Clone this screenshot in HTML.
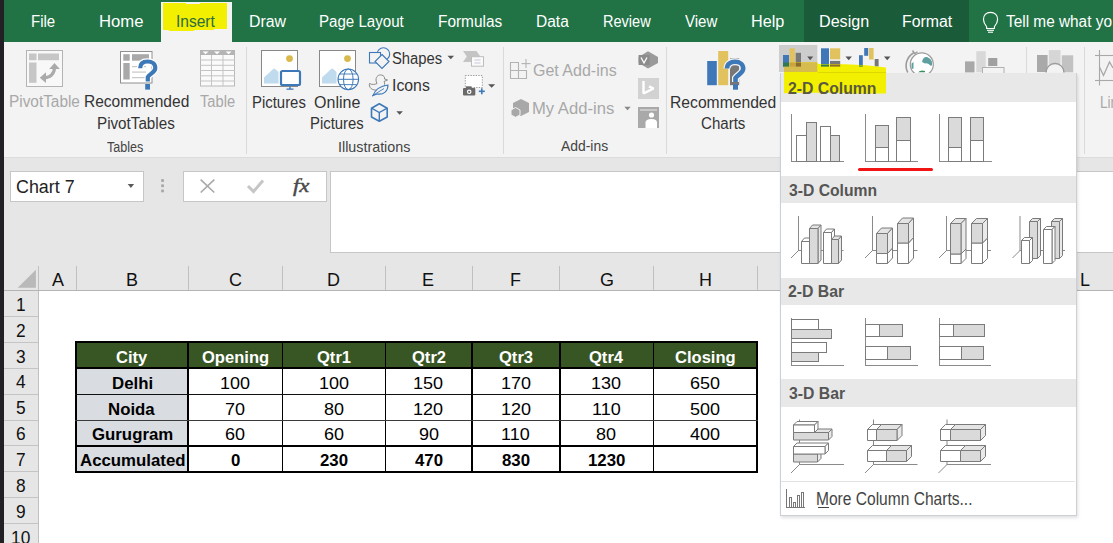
<!DOCTYPE html><html><head><meta charset="utf-8"><style>
html,body{margin:0;padding:0}
body{width:1113px;height:543px;overflow:hidden;position:relative;font-family:"Liberation Sans",sans-serif}
.r{position:absolute}
.t{position:absolute;white-space:nowrap;transform-origin:0 0}
</style></head><body>
<div class="r" style="left:0px;top:0px;width:1113px;height:543px;background:#fff;"></div>
<div class="r" style="left:4px;top:0px;width:1109px;height:42px;background:#217346;"></div>
<div class="r" style="left:804px;top:0px;width:165px;height:42px;background:#1a5b39;"></div>
<div class="r" style="left:4px;top:42px;width:1109px;height:115px;background:#f3f3f3;"></div>
<div class="r" style="left:161px;top:2px;width:71px;height:40px;background:#f3f3f3;"></div>
<div class="r" style="left:4px;top:157px;width:1109px;height:1px;background:#dcdcdc;"></div>
<div class="r" style="left:4px;top:158px;width:1109px;height:133px;background:#e6e6e6;"></div>
<div class="r" style="left:0px;top:0px;width:4px;height:543px;background:#222024;"></div>
<div class="t" style="left:30.50px;top:14.00px;font-size:16.00px;line-height:16.00px;font-weight:400;color:#fff;font-family:'Liberation Sans', sans-serif;transform:scaleX(0.9386);">File</div>
<div class="t" style="left:99.16px;top:14.00px;font-size:16.00px;line-height:16.00px;font-weight:400;color:#fff;font-family:'Liberation Sans', sans-serif;transform:scaleX(1.0433);">Home</div>
<div class="t" style="left:248.73px;top:14.00px;font-size:16.00px;line-height:16.00px;font-weight:400;color:#fff;font-family:'Liberation Sans', sans-serif;transform:scaleX(0.9922);">Draw</div>
<div class="t" style="left:319.29px;top:14.00px;font-size:16.00px;line-height:16.00px;font-weight:400;color:#fff;font-family:'Liberation Sans', sans-serif;transform:scaleX(0.9437);">Page Layout</div>
<div class="t" style="left:437.97px;top:14.00px;font-size:16.00px;line-height:16.00px;font-weight:400;color:#fff;font-family:'Liberation Sans', sans-serif;transform:scaleX(0.9618);">Formulas</div>
<div class="t" style="left:535.86px;top:14.00px;font-size:16.00px;line-height:16.00px;font-weight:400;color:#fff;font-family:'Liberation Sans', sans-serif;transform:scaleX(0.9698);">Data</div>
<div class="t" style="left:603.14px;top:14.00px;font-size:16.00px;line-height:16.00px;font-weight:400;color:#fff;font-family:'Liberation Sans', sans-serif;transform:scaleX(0.9082);">Review</div>
<div class="t" style="left:684.72px;top:14.00px;font-size:16.00px;line-height:16.00px;font-weight:400;color:#fff;font-family:'Liberation Sans', sans-serif;transform:scaleX(0.9382);">View</div>
<div class="t" style="left:750.70px;top:14.00px;font-size:16.00px;line-height:16.00px;font-weight:400;color:#fff;font-family:'Liberation Sans', sans-serif;transform:scaleX(1.0142);">Help</div>
<div class="t" style="left:818.91px;top:14.00px;font-size:16.00px;line-height:16.00px;font-weight:400;color:#fff;font-family:'Liberation Sans', sans-serif;transform:scaleX(1.0076);">Design</div>
<div class="t" style="left:902.23px;top:14.00px;font-size:16.00px;line-height:16.00px;font-weight:400;color:#fff;font-family:'Liberation Sans', sans-serif;transform:scaleX(0.9923);">Format</div>
<svg class="r" style="left:0;top:0" width="1113" height="60"><path d="M163 3 L186 3 L186 4 L200 4 L200 3 L227 3 L227 29 L215 29 L213 30 L195 30 L193 31 L170 31 L168 30 L163 30 Z" fill="#f2f000"/></svg>
<div class="t" style="left:176.30px;top:14.00px;font-size:16.00px;line-height:16.00px;font-weight:400;color:#2a6b3f;font-family:'Liberation Sans', sans-serif;transform:scaleX(0.9693);">Insert</div>
<div class="t" style="left:1005.69px;top:14.00px;font-size:16.00px;line-height:16.00px;font-weight:400;color:#fff;font-family:'Liberation Sans', sans-serif;transform:scaleX(0.9608);">Tell me what yo</div>
<div class="t" style="left:8.77px;top:94.00px;font-size:16.00px;line-height:16.00px;font-weight:400;color:#a8a8a8;font-family:'Liberation Sans', sans-serif;transform:scaleX(0.9605);">PivotTable</div>
<div class="t" style="left:83.76px;top:94.00px;font-size:16.00px;line-height:16.00px;font-weight:400;color:#333333;font-family:'Liberation Sans', sans-serif;transform:scaleX(0.9702);">Recommended</div>
<div class="t" style="left:96.78px;top:116.00px;font-size:16.00px;line-height:16.00px;font-weight:400;color:#333333;font-family:'Liberation Sans', sans-serif;transform:scaleX(0.9500);">PivotTables</div>
<div class="t" style="left:200.31px;top:94.00px;font-size:16.00px;line-height:16.00px;font-weight:400;color:#a8a8a8;font-family:'Liberation Sans', sans-serif;transform:scaleX(0.9167);">Table</div>
<div class="t" style="left:106.75px;top:140.00px;font-size:14.55px;line-height:14.55px;font-weight:400;color:#444;font-family:'Liberation Sans', sans-serif;transform:scaleX(0.8630);">Tables</div>
<div class="t" style="left:251.71px;top:95.00px;font-size:16.00px;line-height:16.00px;font-weight:400;color:#333333;font-family:'Liberation Sans', sans-serif;transform:scaleX(0.9317);">Pictures</div>
<div class="t" style="left:314.08px;top:95.00px;font-size:16.00px;line-height:16.00px;font-weight:400;color:#333333;font-family:'Liberation Sans', sans-serif;transform:scaleX(1.0000);">Online</div>
<div class="t" style="left:309.81px;top:116.00px;font-size:16.00px;line-height:16.00px;font-weight:400;color:#333333;font-family:'Liberation Sans', sans-serif;transform:scaleX(0.9299);">Pictures</div>
<div class="t" style="left:392.33px;top:51.00px;font-size:16.00px;line-height:16.00px;font-weight:400;color:#333333;font-family:'Liberation Sans', sans-serif;transform:scaleX(0.9252);">Shapes</div>
<div class="t" style="left:391.58px;top:78.00px;font-size:16.00px;line-height:16.00px;font-weight:400;color:#333333;font-family:'Liberation Sans', sans-serif;transform:scaleX(0.9879);">Icons</div>
<div class="t" style="left:338.01px;top:140.00px;font-size:14.55px;line-height:14.55px;font-weight:400;color:#444;font-family:'Liberation Sans', sans-serif;transform:scaleX(0.9832);">Illustrations</div>
<div class="t" style="left:532.90px;top:63.00px;font-size:16.00px;line-height:16.00px;font-weight:400;color:#a8a8a8;font-family:'Liberation Sans', sans-serif;transform:scaleX(1.0007);">Get Add-ins</div>
<div class="t" style="left:532.37px;top:101.00px;font-size:16.00px;line-height:16.00px;font-weight:400;color:#a8a8a8;font-family:'Liberation Sans', sans-serif;transform:scaleX(1.0391);">My Add-ins</div>
<div class="t" style="left:560.60px;top:139.00px;font-size:14.55px;line-height:14.55px;font-weight:400;color:#444;font-family:'Liberation Sans', sans-serif;transform:scaleX(0.9546);">Add-ins</div>
<div class="t" style="left:669.75px;top:95.00px;font-size:16.00px;line-height:16.00px;font-weight:400;color:#333333;font-family:'Liberation Sans', sans-serif;transform:scaleX(0.9797);">Recommended</div>
<div class="t" style="left:700.85px;top:116.00px;font-size:16.00px;line-height:16.00px;font-weight:400;color:#333333;font-family:'Liberation Sans', sans-serif;transform:scaleX(0.9419);">Charts</div>
<div class="t" style="left:1099.91px;top:95.00px;font-size:16.00px;line-height:16.00px;font-weight:400;color:#a8a8a8;font-family:'Liberation Sans', sans-serif;transform:scaleX(0.8499);">Line</div>
<svg class="r" style="left:0;top:0" width="1113" height="543"><rect x="26.5" y="50.5" width="36" height="36" fill="#f8f8f8" stroke="#b4b4b4"/><rect x="29" y="53.5" width="7.5" height="6.7" fill="#c6c6c6"/><rect x="38" y="53.5" width="21" height="6.7" fill="#c6c6c6"/><rect x="29" y="62.5" width="7.5" height="20.3" fill="#c6c6c6"/><path d="M45 77.6 A9.3 9.3 0 0 0 54.4 68.3" fill="none" stroke="#ababab" stroke-width="3.2"/><polygon points="39.8,77.7 46,72.3 46,83.1" fill="#ababab"/><polygon points="54.5,63 49.2,69 59.8,69" fill="#ababab"/><rect x="120.5" y="51.5" width="31.5" height="31.5" fill="#fff" stroke="#909090"/><rect x="123.3" y="54.2" width="6.4" height="6.5" fill="#a9a9a9"/><rect x="132" y="54.2" width="17" height="6.5" fill="#a9a9a9"/><rect x="123.3" y="63" width="6.4" height="16.5" fill="#a9a9a9"/><rect x="132" y="66" width="14" height="1.2" fill="#c8c8c8"/><rect x="132" y="71.5" width="14" height="1.2" fill="#c8c8c8"/><rect x="132" y="77" width="14" height="1.2" fill="#c8c8c8"/><path d="M140.2 68.2 C140.2 62.5 144 61.5 147.5 61.5 C152 61.5 155.3 64 155.3 68 C155.3 72.5 150 73.5 147.8 77 L147.8 81.5" fill="none" stroke="#fff" stroke-width="6.5"/><path d="M140.2 68.2 C140.2 62.5 144 61.5 147.5 61.5 C152 61.5 155.3 64 155.3 68 C155.3 72.5 150 73.5 147.8 77 L147.8 81.5" fill="none" stroke="#3d78b8" stroke-width="4.2"/><rect x="145.2" y="84" width="4.8" height="5.6" fill="#3d78b8"/><rect x="200.5" y="50.5" width="34" height="35.5" fill="#fafafa" stroke="#b9b9b9"/><rect x="200" y="50" width="35" height="5" fill="#b4b4b4"/><polygon points="202.6,51.5 208.6,51.5 205.6,54.3" fill="#fff"/><polygon points="214,51.5 220,51.5 217,54.3" fill="#fff"/><polygon points="225.6,51.5 231.6,51.5 228.6,54.3" fill="#fff"/><rect x="211.0" y="55" width="1" height="31" fill="#c4c4c4"/><rect x="222.5" y="55" width="1" height="31" fill="#c4c4c4"/><rect x="200" y="59.5" width="35" height="1" fill="#c4c4c4"/><rect x="200" y="64.8" width="35" height="1" fill="#c4c4c4"/><rect x="200" y="70.0" width="35" height="1" fill="#c4c4c4"/><rect x="200" y="75.3" width="35" height="1" fill="#c4c4c4"/><rect x="200" y="80.5" width="35" height="1" fill="#c4c4c4"/><rect x="261.5" y="50.5" width="36" height="36" fill="#fff" stroke="#888"/><circle cx="289.5" cy="58.6" r="3.4" fill="#d9b84c"/><polygon points="264,83.5 264,77.5 273.5,68.8 275,68.8 278.5,72 278.5,83.5" fill="#c0daee"/><rect x="281" y="71" width="19" height="14" rx="1.5" fill="#fff" stroke="#3d78b8" stroke-width="2.2"/><rect x="289.3" y="86.5" width="1.4" height="2.5" fill="#3d78b8"/><rect x="286.5" y="88.5" width="7" height="1.3" fill="#3d78b8"/><rect x="319.5" y="50.5" width="36" height="36" fill="#fff" stroke="#888"/><circle cx="347.5" cy="58.6" r="3.4" fill="#d9b84c"/><polygon points="322,83.5 322,77.5 331.5,68.8 333,68.8 336.5,72 336.5,83.5" fill="#c0daee"/><circle cx="348.3" cy="79.3" r="10.3" fill="#fff" stroke="#3d78b8" stroke-width="1.1"/><ellipse cx="348.3" cy="79.3" rx="4.8" ry="10.3" fill="none" stroke="#3d78b8" stroke-width="1"/><line x1="338" y1="79.3" x2="358.6" y2="79.3" stroke="#3d78b8" stroke-width="1"/><line x1="340" y1="74" x2="356.6" y2="74" stroke="#3d78b8" stroke-width="0.9"/><line x1="340" y1="84.6" x2="356.6" y2="84.6" stroke="#3d78b8" stroke-width="0.9"/><circle cx="383.4" cy="54" r="6.3" fill="none" stroke="#3d78b8" stroke-width="1.1"/><rect x="369.5" y="52.5" width="11" height="10.5" fill="#f3f3f3" stroke="#3d78b8" stroke-width="1.1"/><polygon points="382,54.5 389,61.5 382,68.5 375,61.5" fill="#f3f3f3" stroke="#3d78b8" stroke-width="1.1"/><path d="M376 80 C376 76 379 74.5 381.5 75 C384 75.5 385 77.5 384.5 79 L387.5 80 L384 81.5 C385 83 385 86 383 88 C381 90.5 374 91 371 88.5 C369.5 87 369 85 369.5 83.5 C372 85 375 84.5 377 83.5 C376.5 82.5 376 81.5 376 80 Z" fill="none" stroke="#8a8a8a" stroke-width="1"/><path d="M373 95.5 C375 90 380 86 388 85 C388 91 384 95 377 94 Z" fill="#f3f3f3" stroke="#3d78b8" stroke-width="1.1"/><line x1="372" y1="96" x2="384" y2="88.5" stroke="#3d78b8" stroke-width="0.9"/><polygon points="379.3,103.8 387.2,108.2 387.2,117 379.3,121.2 371.5,117 371.5,108.2" fill="none" stroke="#3d78b8" stroke-width="1.6" stroke-linejoin="round"/><polyline points="371.5,108.2 379.3,112.5 387.2,108.2" fill="none" stroke="#3d78b8" stroke-width="1.4"/><line x1="379.3" y1="112.5" x2="379.3" y2="121" stroke="#3d78b8" stroke-width="1.4"/><polygon points="447.55,55.7 454.05,55.7 450.8,59.3" fill="#555"/><polygon points="396.35,111.2 402.85,111.2 399.6,114.8" fill="#555"/><polygon points="488.1,84.2 495.1,84.2 491.6,87.8" fill="#555"/><polygon points="624.25,106.7 630.75,106.7 627.5,110.3" fill="#888"/><polygon points="463,51 476.5,51 480.3,56.5 476.5,62 463,62 466.8,56.5" fill="#c4c4c4"/><rect x="471.5" y="56.7" width="12" height="9.5" fill="#fafafa" stroke="#bdbdbd"/><rect x="474.5" y="59.5" width="6" height="1" fill="#c8c8d8"/><rect x="474.5" y="62.5" width="6" height="1" fill="#c8c8d8"/><rect x="465.3" y="75.5" width="17" height="12" fill="#fff" stroke="#9a9a9a" stroke-width="1" stroke-dasharray="1.3 1.3"/><rect x="463" y="88" width="12.3" height="7.6" rx="1" fill="#6a6a6a"/><rect x="466" y="86.3" width="5.5" height="2.5" fill="#6a6a6a"/><circle cx="469.2" cy="91.8" r="2.3" fill="#fff"/><circle cx="469.2" cy="91.8" r="1.1" fill="#6a6a6a"/><rect x="478.8" y="90.5" width="6" height="1.6" fill="#3d78b8"/><rect x="481" y="88.3" width="1.6" height="6" fill="#3d78b8"/><path d="M510.5 78.5 V62.5 H518.5 V78.5 Z M510.5 70.5 H526.5 V78.5 H518.5" fill="none" stroke="#b3b3b3" stroke-width="1.1"/><line x1="521.5" y1="63.6" x2="530.5" y2="63.6" stroke="#b3b3b3" stroke-width="1.1"/><line x1="526" y1="59" x2="526" y2="68" stroke="#b3b3b3" stroke-width="1.1"/><polygon points="521,99 529,103 529,112 521,116 513,112 513,103" fill="#a8a8a8"/><polygon points="515.5,107.5 520,110 520,115 515.5,117.3 511,115 511,110" fill="#a8a8a8" stroke="#f3f3f3" stroke-width="1"/><polygon points="648,51.3 658,57 658,63 648,68.5 638.6,63 638.6,57" fill="#9a9a9a"/><rect x="638.6" y="55" width="11" height="10" fill="#8c8c8c"/><path d="M641 57.5 L644 63 L647 57.5" fill="none" stroke="#fff" stroke-width="1.3"/><rect x="638" y="78" width="21" height="21" fill="#d2d2d2"/><path d="M643.5 81 V93.5 L653.5 88.5 L649 86.3" fill="none" stroke="#fff" stroke-width="2.4" stroke-linejoin="bevel"/><rect x="638" y="107" width="21" height="21" fill="#a9a9a9"/><rect x="640" y="109" width="17" height="2" fill="#c9c9c9"/><circle cx="651.5" cy="115" r="2.6" fill="#fff"/><path d="M645.5 128 V122.5 Q645.5 119 651.5 119 Q657 119 657 122.5 V128 Z" fill="#fff"/><rect x="707.2" y="61" width="9.6" height="24.2" fill="#3f77b9"/><rect x="718.2" y="51" width="10" height="34.2" fill="#e1c25e"/><rect x="730" y="58.4" width="9.2" height="26.8" fill="#777"/><path d="M727 68.5 C727 63.5 731 61.8 735 61.8 C740 61.8 743.2 64.5 743.2 68.5 C743.2 73 738 74.5 735.5 78 L735.5 82" fill="none" stroke="#f3f3f3" stroke-width="7"/><path d="M727 68.5 C727 63.5 731 61.8 735 61.8 C740 61.8 743.2 64.5 743.2 68.5 C743.2 73 738 74.5 735.5 78 L735.5 82" fill="none" stroke="#3d78b8" stroke-width="4.6"/><rect x="733" y="84.3" width="5" height="5.4" fill="#3d78b8"/><rect x="779" y="45" width="38.3" height="27" fill="#cdcdcd"/><rect x="783" y="55" width="6" height="11.6" fill="#3f77b9"/><rect x="789.5" y="48.3" width="5.4" height="18.3" fill="#e1c25e"/><rect x="795.7" y="52.8" width="5.3" height="13.8" fill="#777"/><polygon points="807.2,56.6 813.2,56.6 810.2,60.199999999999996" fill="#555"/><rect x="821" y="48.3" width="8" height="18.3" fill="#3f77b9"/><rect x="830" y="48.3" width="10.2" height="11" fill="#e1c25e"/><rect x="830" y="60.9" width="10.2" height="5.7" fill="#777"/><polygon points="845.45,56.6 851.95,56.6 848.7,60.199999999999996" fill="#555"/><rect x="859" y="55.2" width="3.8" height="11.4" fill="#3f77b9"/><rect x="864.2" y="48" width="4" height="7.8" fill="#3f77b9"/><rect x="869" y="48" width="4.6" height="11.5" fill="#e1c25e"/><rect x="874.7" y="59" width="3.9" height="7.6" fill="#777"/><polygon points="883.95,56.6 890.45,56.6 887.2,60.199999999999996" fill="#555"/><circle cx="921.8" cy="64.4" r="11.5" fill="#fff" stroke="#9c9c9c" stroke-width="1.2"/><path d="M907.8 72.5 A14.5 14.5 0 0 1 913.5 53" fill="none" stroke="#9c9c9c" stroke-width="1.6"/><path d="M912.5 50.5 L914.5 53.5 L917.5 51.8" fill="none" stroke="#9c9c9c" stroke-width="1.4"/><path d="M922 62 Q923 56.5 927 57 Q931 58.5 932 62 Q932.5 65 931 66 Q928 62.5 925 63.5 Z" fill="#5f9fa0"/><path d="M911.5 63.5 L913.5 62 L913.5 68.5 L911.5 69 Z" fill="#5f9fa0"/><path d="M918 72.2 Q921 69.5 925 71 L925 72.2 Z" fill="#3f8f60"/><rect x="965" y="61.4" width="9.5" height="11" fill="#a8a8a8"/><rect x="976.3" y="51.2" width="9.4" height="21" fill="#d8d8d8"/><rect x="988.2" y="58" width="9.1" height="8" fill="#a0a0a0"/><rect x="982.5" y="67.5" width="21.5" height="6" fill="#f3f3f3" stroke="#b0b0b0"/><rect x="1037" y="55" width="10.6" height="17" fill="#a9a9a9"/><rect x="1048.8" y="50.1" width="11.7" height="22" fill="#d6d6d6"/><rect x="1061.8" y="55.3" width="11.4" height="17" fill="#c2c2c2"/><path d="M1046 72.5 A9 9 0 0 1 1064 72.5" fill="#f3f3f3" stroke="#9a9a9a" stroke-width="1.3"/><line x1="1099.5" y1="50" x2="1099.5" y2="85.5" stroke="#a8a8a8" stroke-width="1.1"/><line x1="1095" y1="55.5" x2="1113" y2="55.5" stroke="#a8a8a8" stroke-width="1.1"/><line x1="1095" y1="80.5" x2="1113" y2="80.5" stroke="#a8a8a8" stroke-width="1.1"/><polyline points="1099.5,67 1103.5,75.5 1109.5,62 1113,68" fill="none" stroke="#a8a8a8" stroke-width="1.3"/><path d="M986.5 26.5 C984.5 24 983.5 22 983.5 19.5 C983.5 15 986.5 12.3 990.5 12.3 C994.5 12.3 997.6 15 997.6 19.5 C997.6 22 996.5 24 994.5 26.5 L994.3 28.5 L986.7 28.5 Z" fill="none" stroke="#fff" stroke-width="1.2"/><line x1="987" y1="30.3" x2="994" y2="30.3" stroke="#fff" stroke-width="1.1"/><line x1="988" y1="32.2" x2="993" y2="32.2" stroke="#fff" stroke-width="1.1"/></svg>
<div class="r" style="left:246px;top:47px;width:1px;height:107px;background:#dadada;"></div>
<div class="r" style="left:503px;top:47px;width:1px;height:107px;background:#dadada;"></div>
<div class="r" style="left:665.5px;top:47px;width:1px;height:107px;background:#dadada;"></div>
<div class="r" style="left:1025.5px;top:47px;width:1px;height:107px;background:#dadada;"></div>
<div class="r" style="left:1084px;top:47px;width:1px;height:107px;background:#dadada;"></div>
<div class="r" style="left:10px;top:171px;width:134px;height:31px;background:#fff;box-sizing:border-box;border:1px solid #c6c6c6"></div>
<div class="t" style="left:15.81px;top:178.00px;font-size:18.15px;line-height:18.15px;font-weight:400;color:#222;font-family:'Liberation Sans', sans-serif;transform:scaleX(0.9858);">Chart 7</div>
<div class="r" style="left:183px;top:171px;width:144px;height:31px;background:#fff;box-sizing:border-box;border:1px solid #c6c6c6"></div>
<div class="r" style="left:330px;top:171px;width:800px;height:82px;background:#fff;box-sizing:border-box;border:1px solid #c6c6c6"></div>
<div class="t" style="left:293.47px;top:177.00px;font-size:18.60px;line-height:18.60px;font-weight:400;color:#4a4a4a;font-family:'Liberation Serif', serif;font-style:italic;transform:scaleX(1.2278);-webkit-text-stroke:0.45px #4a4a4a;">fx</div>
<svg class="r" style="left:0;top:0" width="1113" height="543"><polygon points="127.7,184 134.1,184 130.9,188" fill="#5a5a5a"/><rect x="161.2" y="179.2" width="2.7" height="2.7" fill="#a6a6a6"/><rect x="161.2" y="184.4" width="2.7" height="2.7" fill="#a6a6a6"/><rect x="161.2" y="189.6" width="2.7" height="2.7" fill="#a6a6a6"/><path d="M200.7 179.7 L214.3 192.5 M214.3 179.7 L200.7 192.5" stroke="#aaaaaa" stroke-width="1.7"/><path d="M248 186 L253.5 191.5 L263 180.5" fill="none" stroke="#c6c6c6" stroke-width="3"/><polygon points="35.9,269.8 35.9,287.7 17.7,287.7" fill="#b9b9b9"/></svg>
<div class="r" style="left:4px;top:290.3px;width:1109px;height:1.2px;background:#b4b4b4;"></div>
<div class="r" style="left:37.7px;top:266px;width:1px;height:24px;background:#c0c0c0;"></div>
<div class="r" style="left:76.0px;top:266px;width:1px;height:24px;background:#c0c0c0;"></div>
<div class="r" style="left:188.4px;top:266px;width:1px;height:24px;background:#c0c0c0;"></div>
<div class="r" style="left:281.9px;top:266px;width:1px;height:24px;background:#c0c0c0;"></div>
<div class="r" style="left:384.8px;top:266px;width:1px;height:24px;background:#c0c0c0;"></div>
<div class="r" style="left:471.5px;top:266px;width:1px;height:24px;background:#c0c0c0;"></div>
<div class="r" style="left:559.2px;top:266px;width:1px;height:24px;background:#c0c0c0;"></div>
<div class="r" style="left:653.2px;top:266px;width:1px;height:24px;background:#c0c0c0;"></div>
<div class="r" style="left:757.0px;top:266px;width:1px;height:24px;background:#c0c0c0;"></div>
<div class="t" style="left:51.73px;top:272.00px;font-size:17.45px;line-height:17.45px;font-weight:400;color:#111;font-family:'Liberation Sans', sans-serif;transform:scaleX(1.0295);">A</div>
<div class="t" style="left:126.26px;top:272.00px;font-size:17.45px;line-height:17.45px;font-weight:400;color:#111;font-family:'Liberation Sans', sans-serif;transform:scaleX(1.0295);">B</div>
<div class="t" style="left:229.10px;top:272.00px;font-size:17.45px;line-height:17.45px;font-weight:400;color:#111;font-family:'Liberation Sans', sans-serif;transform:scaleX(1.0295);">C</div>
<div class="t" style="left:327.02px;top:272.00px;font-size:17.45px;line-height:17.45px;font-weight:400;color:#111;font-family:'Liberation Sans', sans-serif;transform:scaleX(1.0295);">D</div>
<div class="t" style="left:422.37px;top:272.00px;font-size:17.45px;line-height:17.45px;font-weight:400;color:#111;font-family:'Liberation Sans', sans-serif;transform:scaleX(1.0295);">E</div>
<div class="t" style="left:510.16px;top:272.00px;font-size:17.45px;line-height:17.45px;font-weight:400;color:#111;font-family:'Liberation Sans', sans-serif;transform:scaleX(1.0295);">F</div>
<div class="t" style="left:599.92px;top:272.00px;font-size:17.45px;line-height:17.45px;font-weight:400;color:#111;font-family:'Liberation Sans', sans-serif;transform:scaleX(1.0295);">G</div>
<div class="t" style="left:699.13px;top:272.00px;font-size:17.45px;line-height:17.45px;font-weight:400;color:#111;font-family:'Liberation Sans', sans-serif;transform:scaleX(1.0295);">H</div>
<div class="t" style="left:1080.07px;top:272.00px;font-size:17.45px;line-height:17.45px;font-weight:400;color:#111;font-family:'Liberation Sans', sans-serif;transform:scaleX(1.0295);">L</div>
<div class="r" style="left:38.2px;top:291px;width:0.9px;height:252px;background:#c0c0c0;"></div>
<div class="r" style="left:4px;top:291px;width:34.2px;height:252px;background:#e6e6e6;"></div>
<div class="r" style="left:4px;top:316.16px;width:34.2px;height:1px;background:#c4c4c4;"></div>
<div class="t" style="left:15.93px;top:297.00px;font-size:17.90px;line-height:17.90px;font-weight:400;color:#111;font-family:'Liberation Sans', sans-serif;transform:scaleX(0.9688);">1</div>
<div class="r" style="left:4px;top:342.02000000000004px;width:34.2px;height:1px;background:#c4c4c4;"></div>
<div class="t" style="left:16.19px;top:323.00px;font-size:17.90px;line-height:17.90px;font-weight:400;color:#111;font-family:'Liberation Sans', sans-serif;transform:scaleX(0.9688);">2</div>
<div class="r" style="left:4px;top:367.88px;width:34.2px;height:1px;background:#c4c4c4;"></div>
<div class="t" style="left:16.19px;top:349.00px;font-size:17.90px;line-height:17.90px;font-weight:400;color:#111;font-family:'Liberation Sans', sans-serif;transform:scaleX(0.9688);">3</div>
<div class="r" style="left:4px;top:393.74px;width:34.2px;height:1px;background:#c4c4c4;"></div>
<div class="t" style="left:16.27px;top:374.00px;font-size:17.90px;line-height:17.90px;font-weight:400;color:#111;font-family:'Liberation Sans', sans-serif;transform:scaleX(0.9688);">4</div>
<div class="r" style="left:4px;top:419.6px;width:34.2px;height:1px;background:#c4c4c4;"></div>
<div class="t" style="left:16.19px;top:400.00px;font-size:17.90px;line-height:17.90px;font-weight:400;color:#111;font-family:'Liberation Sans', sans-serif;transform:scaleX(0.9688);">5</div>
<div class="r" style="left:4px;top:445.46000000000004px;width:34.2px;height:1px;background:#c4c4c4;"></div>
<div class="t" style="left:16.10px;top:426.00px;font-size:17.90px;line-height:17.90px;font-weight:400;color:#111;font-family:'Liberation Sans', sans-serif;transform:scaleX(0.9688);">6</div>
<div class="r" style="left:4px;top:471.32000000000005px;width:34.2px;height:1px;background:#c4c4c4;"></div>
<div class="t" style="left:16.19px;top:452.00px;font-size:17.90px;line-height:17.90px;font-weight:400;color:#111;font-family:'Liberation Sans', sans-serif;transform:scaleX(0.9688);">7</div>
<div class="r" style="left:4px;top:497.18px;width:34.2px;height:1px;background:#c4c4c4;"></div>
<div class="t" style="left:16.14px;top:478.00px;font-size:17.90px;line-height:17.90px;font-weight:400;color:#111;font-family:'Liberation Sans', sans-serif;transform:scaleX(0.9688);">8</div>
<div class="r" style="left:4px;top:523.04px;width:34.2px;height:1px;background:#c4c4c4;"></div>
<div class="t" style="left:16.19px;top:504.00px;font-size:17.90px;line-height:17.90px;font-weight:400;color:#111;font-family:'Liberation Sans', sans-serif;transform:scaleX(0.9688);">9</div>
<div class="r" style="left:4px;top:548.9px;width:34.2px;height:1px;background:#c4c4c4;"></div>
<div class="t" style="left:11.03px;top:530.00px;font-size:17.90px;line-height:17.90px;font-weight:400;color:#111;font-family:'Liberation Sans', sans-serif;transform:scaleX(0.9688);">10</div>
<div class="r" style="left:76px;top:342px;width:681px;height:26px;background:#375623;"></div>
<div class="r" style="left:77px;top:369.4px;width:110.5px;height:24.5px;background:#d9dce0;"></div>
<div class="r" style="left:77px;top:395.4px;width:110.5px;height:24.200000000000045px;background:#d9dce0;"></div>
<div class="r" style="left:77px;top:421.1px;width:110.5px;height:24.299999999999955px;background:#d9dce0;"></div>
<div class="r" style="left:77px;top:446.9px;width:110.5px;height:24.5px;background:#d9dce0;"></div>
<div class="r" style="left:75.0px;top:341.2px;width:2px;height:131.7px;background:#000;"></div>
<div class="r" style="left:187.2px;top:341.2px;width:2px;height:131.7px;background:#000;"></div>
<div class="r" style="left:281.85px;top:341.2px;width:1.3px;height:131.7px;background:#000;"></div>
<div class="r" style="left:384.65000000000003px;top:341.2px;width:1.3px;height:131.7px;background:#000;"></div>
<div class="r" style="left:471.35px;top:341.2px;width:1.3px;height:131.7px;background:#000;"></div>
<div class="r" style="left:559.25px;top:341.2px;width:1.3px;height:131.7px;background:#000;"></div>
<div class="r" style="left:652.5500000000001px;top:341.2px;width:1.3px;height:131.7px;background:#000;"></div>
<div class="r" style="left:756.3px;top:341.2px;width:2px;height:131.7px;background:#000;"></div>
<div class="r" style="left:75px;top:341.2px;width:683.3px;height:2px;background:#000;"></div>
<div class="r" style="left:75px;top:367.4px;width:683.3px;height:2px;background:#000;"></div>
<div class="r" style="left:75px;top:393.7px;width:683.3px;height:1.4px;background:#111;"></div>
<div class="r" style="left:75px;top:419.5px;width:683.3px;height:1.2px;background:#3a3a3a;"></div>
<div class="r" style="left:75px;top:444.9px;width:683.3px;height:2px;background:#000;"></div>
<div class="r" style="left:75px;top:470.9px;width:683.3px;height:2px;background:#000;"></div>
<div class="t" style="left:116.15px;top:350.00px;font-size:16.55px;line-height:16.55px;font-weight:700;color:#fff;font-family:'Liberation Sans', sans-serif;transform:scaleX(1.0012);">City</div>
<div class="t" style="left:201.96px;top:350.00px;font-size:16.55px;line-height:16.55px;font-weight:700;color:#fff;font-family:'Liberation Sans', sans-serif;transform:scaleX(1.0012);">Opening</div>
<div class="t" style="left:316.75px;top:350.00px;font-size:16.55px;line-height:16.55px;font-weight:700;color:#fff;font-family:'Liberation Sans', sans-serif;transform:scaleX(1.0012);">Qtr1</div>
<div class="t" style="left:411.62px;top:350.00px;font-size:16.55px;line-height:16.55px;font-weight:700;color:#fff;font-family:'Liberation Sans', sans-serif;transform:scaleX(1.0012);">Qtr2</div>
<div class="t" style="left:498.88px;top:350.00px;font-size:16.55px;line-height:16.55px;font-weight:700;color:#fff;font-family:'Liberation Sans', sans-serif;transform:scaleX(1.0012);">Qtr3</div>
<div class="t" style="left:589.23px;top:350.00px;font-size:16.55px;line-height:16.55px;font-weight:700;color:#fff;font-family:'Liberation Sans', sans-serif;transform:scaleX(1.0012);">Qtr4</div>
<div class="t" style="left:675.09px;top:350.00px;font-size:16.55px;line-height:16.55px;font-weight:700;color:#fff;font-family:'Liberation Sans', sans-serif;transform:scaleX(1.0012);">Closing</div>
<div class="t" style="left:111.59px;top:375.00px;font-size:17.15px;line-height:17.15px;font-weight:700;color:#000;font-family:'Liberation Sans', sans-serif;transform:scaleX(0.9801);">Delhi</div>
<div class="t" style="left:220.00px;top:375.00px;font-size:17.15px;line-height:17.15px;font-weight:400;color:#000;font-family:'Liberation Sans', sans-serif;transform:scaleX(1.0501);">100</div>
<div class="t" style="left:318.55px;top:375.00px;font-size:17.15px;line-height:17.15px;font-weight:400;color:#000;font-family:'Liberation Sans', sans-serif;transform:scaleX(1.0501);">100</div>
<div class="t" style="left:413.30px;top:375.00px;font-size:17.15px;line-height:17.15px;font-weight:400;color:#000;font-family:'Liberation Sans', sans-serif;transform:scaleX(1.0501);">150</div>
<div class="t" style="left:500.60px;top:375.00px;font-size:17.15px;line-height:17.15px;font-weight:400;color:#000;font-family:'Liberation Sans', sans-serif;transform:scaleX(1.0501);">170</div>
<div class="t" style="left:591.20px;top:375.00px;font-size:17.15px;line-height:17.15px;font-weight:400;color:#000;font-family:'Liberation Sans', sans-serif;transform:scaleX(1.0501);">130</div>
<div class="t" style="left:690.12px;top:375.00px;font-size:17.15px;line-height:17.15px;font-weight:400;color:#000;font-family:'Liberation Sans', sans-serif;transform:scaleX(1.0501);">650</div>
<div class="t" style="left:108.15px;top:401.00px;font-size:17.15px;line-height:17.15px;font-weight:700;color:#000;font-family:'Liberation Sans', sans-serif;transform:scaleX(0.9801);">Noida</div>
<div class="t" style="left:225.22px;top:401.00px;font-size:17.15px;line-height:17.15px;font-weight:400;color:#000;font-family:'Liberation Sans', sans-serif;transform:scaleX(1.0501);">70</div>
<div class="t" style="left:323.82px;top:401.00px;font-size:17.15px;line-height:17.15px;font-weight:400;color:#000;font-family:'Liberation Sans', sans-serif;transform:scaleX(1.0501);">80</div>
<div class="t" style="left:413.30px;top:401.00px;font-size:17.15px;line-height:17.15px;font-weight:400;color:#000;font-family:'Liberation Sans', sans-serif;transform:scaleX(1.0501);">120</div>
<div class="t" style="left:500.60px;top:401.00px;font-size:17.15px;line-height:17.15px;font-weight:400;color:#000;font-family:'Liberation Sans', sans-serif;transform:scaleX(1.0501);">120</div>
<div class="t" style="left:591.83px;top:401.00px;font-size:17.15px;line-height:17.15px;font-weight:400;color:#000;font-family:'Liberation Sans', sans-serif;transform:scaleX(1.0501);">110</div>
<div class="t" style="left:690.21px;top:401.00px;font-size:17.15px;line-height:17.15px;font-weight:400;color:#000;font-family:'Liberation Sans', sans-serif;transform:scaleX(1.0501);">500</div>
<div class="t" style="left:91.63px;top:426.00px;font-size:17.15px;line-height:17.15px;font-weight:700;color:#000;font-family:'Liberation Sans', sans-serif;transform:scaleX(0.9801);">Gurugram</div>
<div class="t" style="left:225.22px;top:426.00px;font-size:17.15px;line-height:17.15px;font-weight:400;color:#000;font-family:'Liberation Sans', sans-serif;transform:scaleX(1.0501);">60</div>
<div class="t" style="left:323.77px;top:426.00px;font-size:17.15px;line-height:17.15px;font-weight:400;color:#000;font-family:'Liberation Sans', sans-serif;transform:scaleX(1.0501);">60</div>
<div class="t" style="left:418.57px;top:426.00px;font-size:17.15px;line-height:17.15px;font-weight:400;color:#000;font-family:'Liberation Sans', sans-serif;transform:scaleX(1.0501);">90</div>
<div class="t" style="left:501.23px;top:426.00px;font-size:17.15px;line-height:17.15px;font-weight:400;color:#000;font-family:'Liberation Sans', sans-serif;transform:scaleX(1.0501);">110</div>
<div class="t" style="left:596.47px;top:426.00px;font-size:17.15px;line-height:17.15px;font-weight:400;color:#000;font-family:'Liberation Sans', sans-serif;transform:scaleX(1.0501);">80</div>
<div class="t" style="left:690.39px;top:426.00px;font-size:17.15px;line-height:17.15px;font-weight:400;color:#000;font-family:'Liberation Sans', sans-serif;transform:scaleX(1.0501);">400</div>
<div class="t" style="left:79.66px;top:452.00px;font-size:17.15px;line-height:17.15px;font-weight:700;color:#000;font-family:'Liberation Sans', sans-serif;transform:scaleX(0.9801);">Accumulated</div>
<div class="t" style="left:230.69px;top:452.00px;font-size:17.15px;line-height:17.15px;font-weight:700;color:#000;font-family:'Liberation Sans', sans-serif;transform:scaleX(0.9801);">0</div>
<div class="t" style="left:319.95px;top:452.00px;font-size:17.15px;line-height:17.15px;font-weight:700;color:#000;font-family:'Liberation Sans', sans-serif;transform:scaleX(0.9801);">230</div>
<div class="t" style="left:414.87px;top:452.00px;font-size:17.15px;line-height:17.15px;font-weight:700;color:#000;font-family:'Liberation Sans', sans-serif;transform:scaleX(0.9801);">470</div>
<div class="t" style="left:502.04px;top:452.00px;font-size:17.15px;line-height:17.15px;font-weight:700;color:#000;font-family:'Liberation Sans', sans-serif;transform:scaleX(0.9801);">830</div>
<div class="t" style="left:587.68px;top:452.00px;font-size:17.15px;line-height:17.15px;font-weight:700;color:#000;font-family:'Liberation Sans', sans-serif;transform:scaleX(0.9801);">1230</div>
<div class="r" style="left:779.5px;top:72.5px;width:297px;height:443px;background:#fff;box-sizing:border-box;border:1px solid #cbd0d6;box-shadow:1px 2px 3px rgba(0,0,0,0.12)"></div>
<div class="r" style="left:781px;top:73px;width:295px;height:28.599999999999994px;background:#e8e8e8;"></div>
<div class="t" style="left:788.45px;top:81.00px;font-size:16.00px;line-height:16.00px;font-weight:700;color:#555;font-family:'Liberation Sans', sans-serif;transform:scaleX(0.9859);">2-D Column</div>
<div class="r" style="left:781px;top:176px;width:295px;height:27.099999999999994px;background:#e8e8e8;"></div>
<div class="t" style="left:788.61px;top:183.00px;font-size:16.00px;line-height:16.00px;font-weight:700;color:#555;font-family:'Liberation Sans', sans-serif;transform:scaleX(0.9808);">3-D Column</div>
<div class="r" style="left:781px;top:277.6px;width:295px;height:27.099999999999966px;background:#e8e8e8;"></div>
<div class="t" style="left:788.45px;top:284.00px;font-size:16.00px;line-height:16.00px;font-weight:700;color:#555;font-family:'Liberation Sans', sans-serif;transform:scaleX(0.9882);">2-D Bar</div>
<div class="r" style="left:781px;top:379px;width:295px;height:27.600000000000023px;background:#e8e8e8;"></div>
<div class="t" style="left:788.61px;top:386.00px;font-size:16.00px;line-height:16.00px;font-weight:700;color:#555;font-family:'Liberation Sans', sans-serif;transform:scaleX(0.9854);">3-D Bar</div>
<div class="r" style="left:781px;top:481px;width:294px;height:1px;background:#e2e2e2;"></div>
<div class="t" style="left:816.15px;top:491.00px;font-size:17.45px;line-height:17.45px;font-weight:400;color:#444;font-family:'Liberation Sans', sans-serif;transform:scaleX(0.8922);">More Column Charts...</div>
<div class="r" style="left:818px;top:506.5px;width:11px;height:1px;background:#444;"></div>
<div class="r" style="left:858.3px;top:168.2px;width:74.5px;height:3px;background:#f01414;border-radius:1.5px"></div>
<svg class="r" style="left:0;top:0" width="1113" height="543"><line x1="791.5" y1="114" x2="791.5" y2="162" stroke="#8a8a8a" stroke-width="1"/><line x1="791" y1="161.5" x2="844" y2="161.5" stroke="#8a8a8a" stroke-width="1"/><rect x="796.5" y="135.5" width="10.0" height="26.0" fill="#ffffff" stroke="#7b7b7b" stroke-width="1"/><rect x="806.5" y="122.5" width="10.0" height="39.0" fill="#dadada" stroke="#7b7b7b" stroke-width="1"/><rect x="820.5" y="126.5" width="10.0" height="35.0" fill="#ffffff" stroke="#7b7b7b" stroke-width="1"/><rect x="830.5" y="135.5" width="9.0" height="26.0" fill="#dadada" stroke="#7b7b7b" stroke-width="1"/><line x1="865.5" y1="114" x2="865.5" y2="162" stroke="#8a8a8a" stroke-width="1"/><line x1="865" y1="161.5" x2="918" y2="161.5" stroke="#8a8a8a" stroke-width="1"/><rect x="875.5" y="147.5" width="13.0" height="14.0" fill="#ffffff" stroke="#7b7b7b" stroke-width="1"/><rect x="875.5" y="125.5" width="13.0" height="22.0" fill="#dadada" stroke="#7b7b7b" stroke-width="1"/><rect x="896.5" y="140.5" width="14.0" height="21.0" fill="#ffffff" stroke="#7b7b7b" stroke-width="1"/><rect x="896.5" y="117.5" width="14.0" height="23.0" fill="#dadada" stroke="#7b7b7b" stroke-width="1"/><line x1="939.5" y1="114" x2="939.5" y2="162" stroke="#8a8a8a" stroke-width="1"/><line x1="939" y1="161.5" x2="992" y2="161.5" stroke="#8a8a8a" stroke-width="1"/><rect x="948.5" y="147.5" width="13.0" height="14.0" fill="#ffffff" stroke="#7b7b7b" stroke-width="1"/><rect x="948.5" y="117.5" width="13.0" height="30.0" fill="#dadada" stroke="#7b7b7b" stroke-width="1"/><rect x="970.5" y="140.5" width="13.0" height="21.0" fill="#ffffff" stroke="#7b7b7b" stroke-width="1"/><rect x="970.5" y="117.5" width="13.0" height="23.0" fill="#dadada" stroke="#7b7b7b" stroke-width="1"/><line x1="798.5" y1="216" x2="798.5" y2="250.5" stroke="#8a8a8a" stroke-width="1"/><line x1="798" y1="250.5" x2="843.5" y2="250.5" stroke="#8a8a8a" stroke-width="1"/><line x1="798.5" y1="250.5" x2="791" y2="258" stroke="#8a8a8a" stroke-width="1"/><polygon points="801.5,241.5 804.5,238.0 812.5,238.0 809.5,241.5" fill="#ffffff" stroke="#7b7b7b" stroke-width="1" stroke-linejoin="round"/><polygon points="809.5,241.5 812.5,238.0 812.5,260.0 809.5,263.5" fill="#ffffff" stroke="#7b7b7b" stroke-width="1" stroke-linejoin="round"/><polygon points="801.5,241.5 809.5,241.5 809.5,263.5 801.5,263.5" fill="#ffffff" stroke="#7b7b7b" stroke-width="1" stroke-linejoin="round"/><polygon points="809.5,228.5 812.5,225.0 821.0,225.0 818.0,228.5" fill="#e4e4e4" stroke="#7b7b7b" stroke-width="1" stroke-linejoin="round"/><polygon points="818.0,228.5 821.0,225.0 821.0,260.0 818.0,263.5" fill="#e9e9e9" stroke="#7b7b7b" stroke-width="1" stroke-linejoin="round"/><polygon points="809.5,228.5 818.0,228.5 818.0,263.5 809.5,263.5" fill="#dadada" stroke="#7b7b7b" stroke-width="1" stroke-linejoin="round"/><polygon points="823.5,232.5 826.5,229.0 834.5,229.0 831.5,232.5" fill="#ffffff" stroke="#7b7b7b" stroke-width="1" stroke-linejoin="round"/><polygon points="831.5,232.5 834.5,229.0 834.5,260.0 831.5,263.5" fill="#ffffff" stroke="#7b7b7b" stroke-width="1" stroke-linejoin="round"/><polygon points="823.5,232.5 831.5,232.5 831.5,263.5 823.5,263.5" fill="#ffffff" stroke="#7b7b7b" stroke-width="1" stroke-linejoin="round"/><polygon points="831.5,239.5 834.5,236.0 841.5,236.0 838.5,239.5" fill="#e4e4e4" stroke="#7b7b7b" stroke-width="1" stroke-linejoin="round"/><polygon points="838.5,239.5 841.5,236.0 841.5,260.0 838.5,263.5" fill="#e9e9e9" stroke="#7b7b7b" stroke-width="1" stroke-linejoin="round"/><polygon points="831.5,239.5 838.5,239.5 838.5,263.5 831.5,263.5" fill="#dadada" stroke="#7b7b7b" stroke-width="1" stroke-linejoin="round"/><line x1="872.5" y1="216" x2="872.5" y2="250.5" stroke="#8a8a8a" stroke-width="1"/><line x1="872" y1="250.5" x2="917.5" y2="250.5" stroke="#8a8a8a" stroke-width="1"/><line x1="872.5" y1="250.5" x2="865" y2="258" stroke="#8a8a8a" stroke-width="1"/><polygon points="876.5,253.5 881.5,248.0 892.5,248.0 887.5,253.5" fill="#ffffff" stroke="#7b7b7b" stroke-width="1" stroke-linejoin="round"/><polygon points="887.5,253.5 892.5,248.0 892.5,258.0 887.5,263.5" fill="#ffffff" stroke="#7b7b7b" stroke-width="1" stroke-linejoin="round"/><polygon points="876.5,253.5 887.5,253.5 887.5,263.5 876.5,263.5" fill="#ffffff" stroke="#7b7b7b" stroke-width="1" stroke-linejoin="round"/><polygon points="876.5,233.5 881.5,228.0 892.5,228.0 887.5,233.5" fill="#e4e4e4" stroke="#7b7b7b" stroke-width="1" stroke-linejoin="round"/><polygon points="887.5,233.5 892.5,228.0 892.5,248.0 887.5,253.5" fill="#e9e9e9" stroke="#7b7b7b" stroke-width="1" stroke-linejoin="round"/><polygon points="876.5,233.5 887.5,233.5 887.5,253.5 876.5,253.5" fill="#dadada" stroke="#7b7b7b" stroke-width="1" stroke-linejoin="round"/><polygon points="897.5,243.0 902.5,237.5 913.5,237.5 908.5,243.0" fill="#ffffff" stroke="#7b7b7b" stroke-width="1" stroke-linejoin="round"/><polygon points="908.5,243.0 913.5,237.5 913.5,258.0 908.5,263.5" fill="#ffffff" stroke="#7b7b7b" stroke-width="1" stroke-linejoin="round"/><polygon points="897.5,243.0 908.5,243.0 908.5,263.5 897.5,263.5" fill="#ffffff" stroke="#7b7b7b" stroke-width="1" stroke-linejoin="round"/><polygon points="897.5,223.5 902.5,218.0 913.5,218.0 908.5,223.5" fill="#e4e4e4" stroke="#7b7b7b" stroke-width="1" stroke-linejoin="round"/><polygon points="908.5,223.5 913.5,218.0 913.5,237.5 908.5,243.0" fill="#e9e9e9" stroke="#7b7b7b" stroke-width="1" stroke-linejoin="round"/><polygon points="897.5,223.5 908.5,223.5 908.5,243.0 897.5,243.0" fill="#dadada" stroke="#7b7b7b" stroke-width="1" stroke-linejoin="round"/><line x1="946.5" y1="216" x2="946.5" y2="250.5" stroke="#8a8a8a" stroke-width="1"/><line x1="946" y1="250.5" x2="991" y2="250.5" stroke="#8a8a8a" stroke-width="1"/><line x1="946.5" y1="250.5" x2="939" y2="258" stroke="#8a8a8a" stroke-width="1"/><polygon points="950.5,254.0 955.5,249.0 966.0,249.0 961.0,254.0" fill="#ffffff" stroke="#7b7b7b" stroke-width="1" stroke-linejoin="round"/><polygon points="961.0,254.0 966.0,249.0 966.0,258.5 961.0,263.5" fill="#ffffff" stroke="#7b7b7b" stroke-width="1" stroke-linejoin="round"/><polygon points="950.5,254.0 961.0,254.0 961.0,263.5 950.5,263.5" fill="#ffffff" stroke="#7b7b7b" stroke-width="1" stroke-linejoin="round"/><polygon points="950.5,223.5 955.5,218.5 966.0,218.5 961.0,223.5" fill="#e4e4e4" stroke="#7b7b7b" stroke-width="1" stroke-linejoin="round"/><polygon points="961.0,223.5 966.0,218.5 966.0,249.0 961.0,254.0" fill="#e9e9e9" stroke="#7b7b7b" stroke-width="1" stroke-linejoin="round"/><polygon points="950.5,223.5 961.0,223.5 961.0,254.0 950.5,254.0" fill="#dadada" stroke="#7b7b7b" stroke-width="1" stroke-linejoin="round"/><polygon points="971.5,243.0 976.5,238.0 987.5,238.0 982.5,243.0" fill="#ffffff" stroke="#7b7b7b" stroke-width="1" stroke-linejoin="round"/><polygon points="982.5,243.0 987.5,238.0 987.5,258.5 982.5,263.5" fill="#ffffff" stroke="#7b7b7b" stroke-width="1" stroke-linejoin="round"/><polygon points="971.5,243.0 982.5,243.0 982.5,263.5 971.5,263.5" fill="#ffffff" stroke="#7b7b7b" stroke-width="1" stroke-linejoin="round"/><polygon points="971.5,223.5 976.5,218.5 987.5,218.5 982.5,223.5" fill="#e4e4e4" stroke="#7b7b7b" stroke-width="1" stroke-linejoin="round"/><polygon points="982.5,223.5 987.5,218.5 987.5,238.0 982.5,243.0" fill="#e9e9e9" stroke="#7b7b7b" stroke-width="1" stroke-linejoin="round"/><polygon points="971.5,223.5 982.5,223.5 982.5,243.0 971.5,243.0" fill="#dadada" stroke="#7b7b7b" stroke-width="1" stroke-linejoin="round"/><line x1="1020.0" y1="216" x2="1020.0" y2="250.5" stroke="#8a8a8a" stroke-width="1"/><line x1="1019.5" y1="250.5" x2="1065" y2="250.5" stroke="#8a8a8a" stroke-width="1"/><line x1="1020.0" y1="250.5" x2="1012.5" y2="258" stroke="#8a8a8a" stroke-width="1"/><polygon points="1029.5,221.5 1032.5,218.5 1040.5,218.5 1037.5,221.5" fill="#e4e4e4" stroke="#7b7b7b" stroke-width="1" stroke-linejoin="round"/><polygon points="1037.5,221.5 1040.5,218.5 1040.5,255.5 1037.5,258.5" fill="#e9e9e9" stroke="#7b7b7b" stroke-width="1" stroke-linejoin="round"/><polygon points="1029.5,221.5 1037.5,221.5 1037.5,258.5 1029.5,258.5" fill="#dadada" stroke="#7b7b7b" stroke-width="1" stroke-linejoin="round"/><polygon points="1051.5,221.5 1054.5,218.5 1062.5,218.5 1059.5,221.5" fill="#e4e4e4" stroke="#7b7b7b" stroke-width="1" stroke-linejoin="round"/><polygon points="1059.5,221.5 1062.5,218.5 1062.5,255.5 1059.5,258.5" fill="#e9e9e9" stroke="#7b7b7b" stroke-width="1" stroke-linejoin="round"/><polygon points="1051.5,221.5 1059.5,221.5 1059.5,258.5 1051.5,258.5" fill="#dadada" stroke="#7b7b7b" stroke-width="1" stroke-linejoin="round"/><polygon points="1021.5,240.5 1024.5,237.5 1032.5,237.5 1029.5,240.5" fill="#ffffff" stroke="#7b7b7b" stroke-width="1" stroke-linejoin="round"/><polygon points="1029.5,240.5 1032.5,237.5 1032.5,260.5 1029.5,263.5" fill="#ffffff" stroke="#7b7b7b" stroke-width="1" stroke-linejoin="round"/><polygon points="1021.5,240.5 1029.5,240.5 1029.5,263.5 1021.5,263.5" fill="#ffffff" stroke="#7b7b7b" stroke-width="1" stroke-linejoin="round"/><polygon points="1043.5,229.5 1046.5,226.5 1055.0,226.5 1052.0,229.5" fill="#ffffff" stroke="#7b7b7b" stroke-width="1" stroke-linejoin="round"/><polygon points="1052.0,229.5 1055.0,226.5 1055.0,260.5 1052.0,263.5" fill="#ffffff" stroke="#7b7b7b" stroke-width="1" stroke-linejoin="round"/><polygon points="1043.5,229.5 1052.0,229.5 1052.0,263.5 1043.5,263.5" fill="#ffffff" stroke="#7b7b7b" stroke-width="1" stroke-linejoin="round"/><line x1="791.5" y1="318" x2="791.5" y2="365.5" stroke="#8a8a8a" stroke-width="1"/><line x1="791" y1="365.5" x2="844" y2="365.5" stroke="#8a8a8a" stroke-width="1"/><rect x="791.5" y="319.5" width="27.0" height="10.0" fill="#ffffff" stroke="#7b7b7b" stroke-width="1"/><rect x="791.5" y="329.5" width="40.0" height="9.0" fill="#dadada" stroke="#7b7b7b" stroke-width="1"/><rect x="791.5" y="342.5" width="35.0" height="10.0" fill="#ffffff" stroke="#7b7b7b" stroke-width="1"/><rect x="791.5" y="352.5" width="27.0" height="9.0" fill="#dadada" stroke="#7b7b7b" stroke-width="1"/><line x1="865.5" y1="318" x2="865.5" y2="365.5" stroke="#8a8a8a" stroke-width="1"/><line x1="865" y1="365.5" x2="918" y2="365.5" stroke="#8a8a8a" stroke-width="1"/><rect x="865.5" y="324.5" width="14.0" height="12.0" fill="#ffffff" stroke="#7b7b7b" stroke-width="1"/><rect x="879.5" y="324.5" width="23.0" height="12.0" fill="#dadada" stroke="#7b7b7b" stroke-width="1"/><rect x="865.5" y="346.5" width="22.0" height="13.0" fill="#ffffff" stroke="#7b7b7b" stroke-width="1"/><rect x="887.5" y="346.5" width="23.0" height="13.0" fill="#dadada" stroke="#7b7b7b" stroke-width="1"/><line x1="939.5" y1="318" x2="939.5" y2="365.5" stroke="#8a8a8a" stroke-width="1"/><line x1="939" y1="365.5" x2="991" y2="365.5" stroke="#8a8a8a" stroke-width="1"/><rect x="939.5" y="324.5" width="14.0" height="12.0" fill="#ffffff" stroke="#7b7b7b" stroke-width="1"/><rect x="953.5" y="324.5" width="31.0" height="12.0" fill="#dadada" stroke="#7b7b7b" stroke-width="1"/><rect x="939.5" y="346.5" width="22.0" height="13.0" fill="#ffffff" stroke="#7b7b7b" stroke-width="1"/><rect x="961.5" y="346.5" width="22.0" height="13.0" fill="#dadada" stroke="#7b7b7b" stroke-width="1"/><line x1="799.5" y1="419.5" x2="799.5" y2="464.5" stroke="#8a8a8a" stroke-width="1"/><line x1="799" y1="464.5" x2="844" y2="464.5" stroke="#8a8a8a" stroke-width="1"/><line x1="799.5" y1="464.5" x2="791" y2="473" stroke="#8a8a8a" stroke-width="1"/><polygon points="793.5,432.5 797.0,429.0 832.0,429.0 828.5,432.5" fill="#e4e4e4" stroke="#7b7b7b" stroke-width="1" stroke-linejoin="round"/><polygon points="828.5,432.5 832.0,429.0 832.0,436.5 828.5,440.0" fill="#e9e9e9" stroke="#7b7b7b" stroke-width="1" stroke-linejoin="round"/><polygon points="793.5,432.5 828.5,432.5 828.5,440.0 793.5,440.0" fill="#dadada" stroke="#7b7b7b" stroke-width="1" stroke-linejoin="round"/><polygon points="793.5,425.0 797.0,421.5 818.0,421.5 814.5,425.0" fill="#ffffff" stroke="#7b7b7b" stroke-width="1" stroke-linejoin="round"/><polygon points="814.5,425.0 818.0,421.5 818.0,429.0 814.5,432.5" fill="#ffffff" stroke="#7b7b7b" stroke-width="1" stroke-linejoin="round"/><polygon points="793.5,425.0 814.5,425.0 814.5,432.5 793.5,432.5" fill="#ffffff" stroke="#7b7b7b" stroke-width="1" stroke-linejoin="round"/><polygon points="793.5,454.0 797.0,450.5 821.0,450.5 817.5,454.0" fill="#e4e4e4" stroke="#7b7b7b" stroke-width="1" stroke-linejoin="round"/><polygon points="817.5,454.0 821.0,450.5 821.0,458.5 817.5,462.0" fill="#e9e9e9" stroke="#7b7b7b" stroke-width="1" stroke-linejoin="round"/><polygon points="793.5,454.0 817.5,454.0 817.5,462.0 793.5,462.0" fill="#dadada" stroke="#7b7b7b" stroke-width="1" stroke-linejoin="round"/><polygon points="793.5,446.5 797.0,443.0 828.5,443.0 825.0,446.5" fill="#ffffff" stroke="#7b7b7b" stroke-width="1" stroke-linejoin="round"/><polygon points="825.0,446.5 828.5,443.0 828.5,450.5 825.0,454.0" fill="#ffffff" stroke="#7b7b7b" stroke-width="1" stroke-linejoin="round"/><polygon points="793.5,446.5 825.0,446.5 825.0,454.0 793.5,454.0" fill="#ffffff" stroke="#7b7b7b" stroke-width="1" stroke-linejoin="round"/><line x1="873.5" y1="419.5" x2="873.5" y2="464.5" stroke="#8a8a8a" stroke-width="1"/><line x1="873" y1="464.5" x2="917.5" y2="464.5" stroke="#8a8a8a" stroke-width="1"/><line x1="873.5" y1="464.5" x2="865" y2="473" stroke="#8a8a8a" stroke-width="1"/><polygon points="867.5,429.5 872.5,424.5 881.5,424.5 876.5,429.5" fill="#ffffff" stroke="#7b7b7b" stroke-width="1" stroke-linejoin="round"/><polygon points="876.5,429.5 881.5,424.5 881.5,435.5 876.5,440.5" fill="#ffffff" stroke="#7b7b7b" stroke-width="1" stroke-linejoin="round"/><polygon points="867.5,429.5 876.5,429.5 876.5,440.5 867.5,440.5" fill="#ffffff" stroke="#7b7b7b" stroke-width="1" stroke-linejoin="round"/><polygon points="876.5,429.5 881.5,424.5 902.0,424.5 897.0,429.5" fill="#e4e4e4" stroke="#7b7b7b" stroke-width="1" stroke-linejoin="round"/><polygon points="897.0,429.5 902.0,424.5 902.0,435.5 897.0,440.5" fill="#e9e9e9" stroke="#7b7b7b" stroke-width="1" stroke-linejoin="round"/><polygon points="876.5,429.5 897.0,429.5 897.0,440.5 876.5,440.5" fill="#dadada" stroke="#7b7b7b" stroke-width="1" stroke-linejoin="round"/><polygon points="867.5,450.5 872.5,445.5 891.5,445.5 886.5,450.5" fill="#ffffff" stroke="#7b7b7b" stroke-width="1" stroke-linejoin="round"/><polygon points="886.5,450.5 891.5,445.5 891.5,456.5 886.5,461.5" fill="#ffffff" stroke="#7b7b7b" stroke-width="1" stroke-linejoin="round"/><polygon points="867.5,450.5 886.5,450.5 886.5,461.5 867.5,461.5" fill="#ffffff" stroke="#7b7b7b" stroke-width="1" stroke-linejoin="round"/><polygon points="886.5,450.5 891.5,445.5 911.5,445.5 906.5,450.5" fill="#e4e4e4" stroke="#7b7b7b" stroke-width="1" stroke-linejoin="round"/><polygon points="906.5,450.5 911.5,445.5 911.5,456.5 906.5,461.5" fill="#e9e9e9" stroke="#7b7b7b" stroke-width="1" stroke-linejoin="round"/><polygon points="886.5,450.5 906.5,450.5 906.5,461.5 886.5,461.5" fill="#dadada" stroke="#7b7b7b" stroke-width="1" stroke-linejoin="round"/><line x1="947.0" y1="419.5" x2="947.0" y2="464.5" stroke="#8a8a8a" stroke-width="1"/><line x1="946.5" y1="464.5" x2="991" y2="464.5" stroke="#8a8a8a" stroke-width="1"/><line x1="947.0" y1="464.5" x2="938.5" y2="473" stroke="#8a8a8a" stroke-width="1"/><polygon points="940.5,429.5 945.5,424.5 955.5,424.5 950.5,429.5" fill="#ffffff" stroke="#7b7b7b" stroke-width="1" stroke-linejoin="round"/><polygon points="950.5,429.5 955.5,424.5 955.5,435.5 950.5,440.5" fill="#ffffff" stroke="#7b7b7b" stroke-width="1" stroke-linejoin="round"/><polygon points="940.5,429.5 950.5,429.5 950.5,440.5 940.5,440.5" fill="#ffffff" stroke="#7b7b7b" stroke-width="1" stroke-linejoin="round"/><polygon points="950.5,429.5 955.5,424.5 985.5,424.5 980.5,429.5" fill="#e4e4e4" stroke="#7b7b7b" stroke-width="1" stroke-linejoin="round"/><polygon points="980.5,429.5 985.5,424.5 985.5,435.5 980.5,440.5" fill="#e9e9e9" stroke="#7b7b7b" stroke-width="1" stroke-linejoin="round"/><polygon points="950.5,429.5 980.5,429.5 980.5,440.5 950.5,440.5" fill="#dadada" stroke="#7b7b7b" stroke-width="1" stroke-linejoin="round"/><polygon points="940.5,450.5 945.5,445.5 965.5,445.5 960.5,450.5" fill="#ffffff" stroke="#7b7b7b" stroke-width="1" stroke-linejoin="round"/><polygon points="960.5,450.5 965.5,445.5 965.5,456.5 960.5,461.5" fill="#ffffff" stroke="#7b7b7b" stroke-width="1" stroke-linejoin="round"/><polygon points="940.5,450.5 960.5,450.5 960.5,461.5 940.5,461.5" fill="#ffffff" stroke="#7b7b7b" stroke-width="1" stroke-linejoin="round"/><polygon points="960.5,450.5 965.5,445.5 985.5,445.5 980.5,450.5" fill="#e4e4e4" stroke="#7b7b7b" stroke-width="1" stroke-linejoin="round"/><polygon points="980.5,450.5 985.5,445.5 985.5,456.5 980.5,461.5" fill="#e9e9e9" stroke="#7b7b7b" stroke-width="1" stroke-linejoin="round"/><polygon points="960.5,450.5 980.5,450.5 980.5,461.5 960.5,461.5" fill="#dadada" stroke="#7b7b7b" stroke-width="1" stroke-linejoin="round"/><line x1="786.5" y1="489" x2="786.5" y2="507.5" stroke="#777" stroke-width="1"/><line x1="786" y1="507.5" x2="805" y2="507.5" stroke="#777" stroke-width="1"/><rect x="789.5" y="497.5" width="2.0" height="10.0" fill="#fff" stroke="#777" stroke-width="1"/><rect x="793.5" y="502.5" width="2.0" height="5.0" fill="#fff" stroke="#777" stroke-width="1"/><rect x="797.5" y="495.5" width="2.0" height="12.0" fill="#fff" stroke="#777" stroke-width="1"/><rect x="801.5" y="492.5" width="2.0" height="15.0" fill="#fff" stroke="#777" stroke-width="1"/></svg>
<svg class="r" style="left:0;top:0" width="1113" height="543"><path d="M784 63.5 L797 62.3 L817 62.3 L818 64 L845 64.3 L866 65.3 L886 67.5 L886 93.5 L850 93.5 L840 92.8 L800 92.8 L784 93.3 Z" fill="#f2f000"/><path d="M784 63.5 L797 62.3 L817.3 62.3 L817.3 72 L784 72 Z" fill="#d6bc4e"/><rect x="783" y="62.5" width="6" height="4.1" fill="#2f7a52"/><rect x="789.5" y="62.5" width="5.4" height="4.1" fill="#c9a63a"/><rect x="795.7" y="62.5" width="5.3" height="4.1" fill="#8c6c2c"/><rect x="821" y="64.5" width="8" height="2.1" fill="#2f7a52"/><rect x="830" y="64.5" width="10.2" height="2.1" fill="#8c6c2c"/><rect x="859" y="65.5" width="3.8" height="1.1" fill="#2f7a52"/><rect x="818" y="72" width="68" height="1" fill="#dcd800"/></svg>
<div class="t" style="left:788.45px;top:81.00px;font-size:16.00px;line-height:16.00px;font-weight:700;color:#5a5840;font-family:'Liberation Sans', sans-serif;transform:scaleX(0.9859);">2-D Column</div>
</body></html>
